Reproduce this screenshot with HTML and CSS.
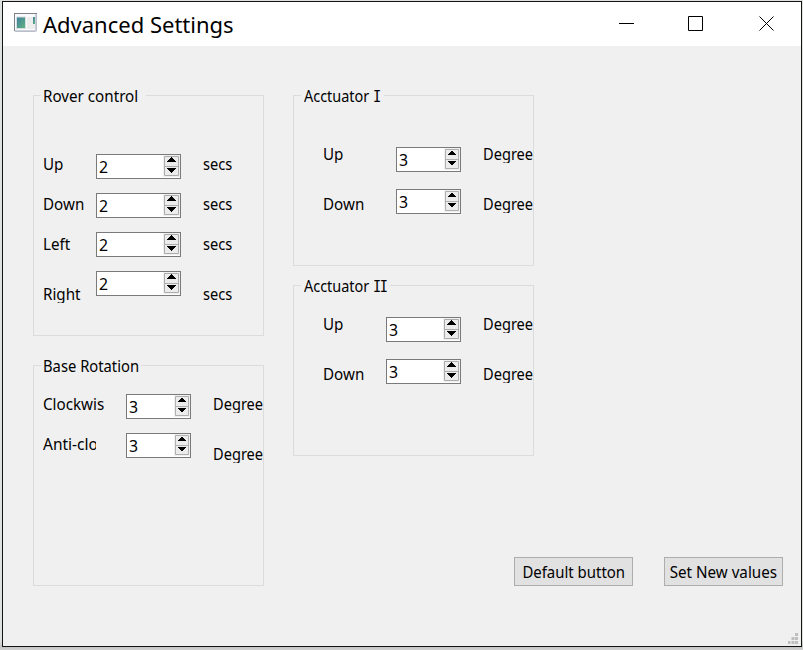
FILE: index.html
```html
<!DOCTYPE html>
<html lang="en">
<head>
<meta charset="utf-8">
<title>Advanced Settings</title>
<link rel="stylesheet" href="styles.css">
</head>
<body>
<svg width="0" height="0" class="defs">
  <symbol id="arrows" viewBox="0 0 15 20" preserveAspectRatio="none">
    <path d="M.5.5h14v19h-14zM.5 10.5h14" fill="#ececec" stroke="#acacac"/>
    <path d="M7 1h1v1h1v1h1v1h1v1h1v1H3V5h1V4h1V3h1V2h1zM3 12h9v1h-1v1h-1v1H9v1H8v1H7v-1H6v-1H5v-1H4v-1H3z" fill="#000" shape-rendering="crispEdges"/>
  </symbol>
</svg>
<div class="window">
  <header class="titlebar">
    <svg class="app-icon" width="23" height="19" viewBox="0 0 23 19">
      <defs><linearGradient id="pane" x1="0" y1="0" x2="1" y2="1"><stop offset="0" stop-color="#417fa0"/><stop offset="1" stop-color="#5fb67c"/></linearGradient></defs>
      <rect x=".5" y=".5" width="22" height="18" rx="1" fill="#fafafa" stroke="#b9bec9"/>
      <path d="M0 .5h23M.5 0v18" stroke="#7e838a"/>
      <path d="M1 17.5h21M21.5 1v17" stroke="#cbd0dc"/>
      <path d="M13 4h8v12h-8z" fill="#ededed"/>
      <path d="M2.500 4h9v11.500h-9z" fill="url(#pane)" stroke="#d5dce1"/>
      <path d="M19 4h2v7h-2z" fill="url(#pane)"/>
    </svg>
    <h1><span>Advanced Settings</span></h1>
    <svg class="controls" width="156" height="16" viewBox="0 0 156 16" fill="none" stroke="#000">
      <path d="M0 7.500h15M69.500.5h14v14h-14z"/>
      <path d="M140.500.5l14 14M154.500.5l-14 14"/>
    </svg>
  </header>
  <main>
    <div class="column">
      <section class="group rover">
        <h2><span>Rover control</span></h2>
        <div class="fields">
          <div class="labels"><p><span>Up</span></p><p><span>Down</span></p><p><span>Left</span></p><p class="late"><span>Right</span></p></div>
          <div class="spins">
            <div class="spin"><b>2</b><svg><use href="#arrows"/></svg></div>
            <div class="spin"><b>2</b><svg><use href="#arrows"/></svg></div>
            <div class="spin"><b>2</b><svg><use href="#arrows"/></svg></div>
            <div class="spin"><b>2</b><svg><use href="#arrows"/></svg></div>
          </div>
          <div class="units"><p><span>secs</span></p><p><span>secs</span></p><p><span>secs</span></p><p class="late"><span>secs</span></p></div>
        </div>
      </section>
      <section class="group base">
        <h2><span>Base Rotation</span></h2>
        <div class="fields">
          <div class="labels"><p><span>Clockwis</span></p><p class="clipped"><span>Anti-clo</span></p></div>
          <div class="spins">
            <div class="spin"><b>3</b><svg><use href="#arrows"/></svg></div>
            <div class="spin"><b>3</b><svg><use href="#arrows"/></svg></div>
          </div>
          <div class="units"><p><span>Degree</span></p><p class="late"><span>Degree</span></p></div>
        </div>
      </section>
    </div>
    <div class="column second">
      <section class="group act1">
        <h2><span>Acctuator <i>I</i></span></h2>
        <div class="fields">
          <div class="labels"><p><span>Up</span></p><p class="late"><span>Down</span></p></div>
          <div class="spins">
            <div class="spin"><b>3</b><svg><use href="#arrows"/></svg></div>
            <div class="spin"><b>3</b><svg><use href="#arrows"/></svg></div>
          </div>
          <div class="units"><p><span>Degree</span></p><p class="late"><span>Degree</span></p></div>
        </div>
      </section>
      <section class="group act2">
        <h2><span>Acctuator <i>II</i></span></h2>
        <div class="fields">
          <div class="labels"><p><span>Up</span></p><p class="late"><span>Down</span></p></div>
          <div class="spins">
            <div class="spin"><b>3</b><svg><use href="#arrows"/></svg></div>
            <div class="spin"><b>3</b><svg><use href="#arrows"/></svg></div>
          </div>
          <div class="units"><p><span>Degree</span></p><p class="late"><span>Degree</span></p></div>
        </div>
      </section>
    </div>
    <div class="actions">
      <button><span>Default button</span></button>
      <button><span>Set New values</span></button>
    </div>
    <svg class="grip" width="10" height="11" viewBox="0 0 10 11" fill="#bfbfbf"><path d="M7 0h3v3H7zM3.500 4h3v3h-3zM7 4h3v3H7zM0 8h2.500v3H0zM3.500 8h3v3h-3zM7 8h3v3H7z"/></svg>
  </main>
</div>
</body>
</html>
```
FILE: styles.css
```css
* { box-sizing: border-box; margin: 0; padding: 0; }
body {
  width: 803px; height: 650px; overflow: hidden;
  padding: 1px 1px 3px 2px;
  background: linear-gradient(#dfe3df, #dfe3df 640px, #c3c3c3 647px, #d2d2d2);
  font: 16.5px/23px "Noto Sans", sans-serif; color: #000;
}
.defs { position: absolute; }
.window { width: 800px; height: 646px; border: 1px solid #141414; background: #f0f0f0; display: flex; flex-direction: column; }
.titlebar { height: 44px; background: #fff; display: flex; align-items: flex-start; flex: none; }
.app-icon { margin: 11px 6px 0 11px; flex: none; }
h1 { font-size: 22px; font-weight: 400; line-height: 30px; margin-top: 7px; width: 576px; white-space: nowrap; }
.controls { margin-top: 14px; flex: none; }
main { flex: 1; display: grid; grid-template: 511px 29px 1fr / 231px 241px 1fr; column-gap: 29px; padding-left: 30px; }
.column { grid-area: 1 / 1 / 4 / 2; padding-top: 49px; display: flex; flex-direction: column; gap: 29px; }
.column.second { grid-area: 1 / 2 / 2 / 3; gap: 19px; }
.group { border: 1px solid #dcdcdc; flex: none; }
h2 { font-size: inherit; font-weight: 400; height: 24px; margin: -12px 0 0 7px; padding-left: 2px; background: #f0f0f0; white-space: nowrap; }
h2 i { font-style: normal; font-family: "DejaVu Sans Mono", monospace; font-size: 15.5px; letter-spacing: -1.5px; }
span { display: inline-block; transform: scaleX(.92); transform-origin: 0 50%; }
h1 span { transform: none; }
.rover { height: 241px; } .rover h2 { width: 105px; }
.base { height: 221px; } .base h2 { width: 100px; }
.base h2 span { transform: scaleX(.895); }
.act1, .act2 { height: 171px; }
.act1 h2 { width: 83px; } .act2 h2 { width: 89px; }
.act1 h2 span, .act2 h2 span { transform: scaleX(.875); margin-left: 1px; }
.fields { display: grid; height: 100px; }
.labels p, .units p { height: 21px; overflow: hidden; white-space: nowrap; margin-bottom: 19px; }
.units span { transform: scaleX(.885); }
.spin { height: 25px; border: 1px solid #7a7a7a; background: #fff; display: flex; justify-content: space-between; padding: 1px 1px 0 2px; }
.spin b { font-weight: 400; line-height: 23px; transform: scaleX(.96); transform-origin: 0 0; margin-top: -1px; }
.spin svg { width: 15px; height: 20px; outline: 1px solid #f0f0f0; }
.spins { display: grid; align-content: start; gap: 14px; }
.late.late { margin-top: 29px; }
.rover .fields { grid-template-columns: 53px 85px 1fr; padding: 44px 0 0 9px; }
.rover .spins { padding-top: 2px; }
.rover .units { padding-left: 22px; }
.base .fields { grid-template-columns: 83px 65px 1fr; padding: 14px 0 0 9px; }
.base .spins { padding-top: 2px; }
.base .units { padding-left: 22px; }
.clipped { width: 53px; }
.clipped span { transform: scaleX(.94); }
.act1 .fields { grid-template-columns: 73px 65px 1fr; padding: 34px 0 0 29px; }
.act1 .spins { padding-top: 5px; gap: 17px; }
.act2 .fields { grid-template-columns: 63px 75px 1fr; padding: 14px 0 0 29px; }
.act2 .spins { padding-top: 5px; gap: 17px; }
.act1 .units, .act2 .units { padding-left: 22px; }
.base .spin svg, .act1 .spin svg { width: 14px; }
.actions { grid-area: 2 / 2 / 3 / 4; justify-self: end; display: flex; gap: 31px; padding-right: 18px; }
button { width: 119px; height: 29px; background: #e1e1e1; border: 1px solid #adadad; font: inherit; white-space: nowrap; }
button span { transform: scaleX(.905); transform-origin: 50% 50%; }
button:last-child span { transform: scaleX(.92); }
.grip { grid-area: 3 / 3; justify-self: end; align-self: end; margin: 0 3px 2px 0; }
```
